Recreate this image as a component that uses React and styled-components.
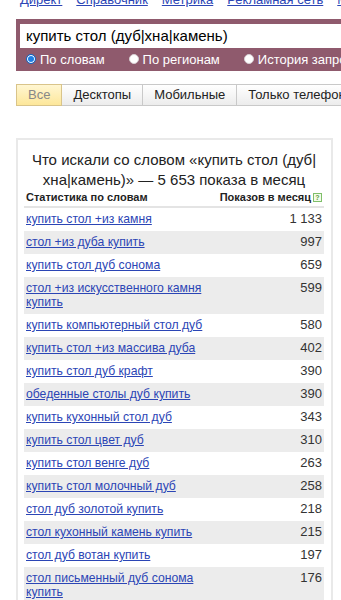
import React from "react";
import styled, { createGlobalStyle } from "styled-components";

const GlobalStyle = createGlobalStyle`
  html, body {
    margin: 0;
    padding: 0;
    background: #fff;
    overflow: hidden;
    font-family: "Liberation Sans", Arial, sans-serif;
  }
`;

const Page = styled.div`
  padding-left: 16px;
  width: 400px;
`;

const Nav = styled.div`
  display: flex;
  gap: 14px;
  margin-top: -8px;
  padding-left: 4px;
  font-size: 13px;
  line-height: 15px;
  white-space: nowrap;
`;

const NavLink = styled.a`
  color: #2b45b5;
  text-decoration: underline;
`;

const SearchPanel = styled.div`
  margin-top: 12px;
  background: #8f5a6d;
  padding: 5px 0 0 4px;
  height: 47px;
`;

const Input = styled.div`
  background: #fff;
  height: 24px;
  line-height: 24px;
  padding-left: 6px;
  font-size: 15px;
  color: #000;
  white-space: nowrap;
`;

const RadioRow = styled.div`
  display: flex;
  align-items: center;
  height: 22px;
  padding-left: 6px;
  gap: 24px;
  white-space: nowrap;
`;

const RadioItem = styled.label`
  display: flex;
  align-items: center;
  gap: 4px;
  color: #fff;
  font-size: 13px;
`;

const RadioDot = styled.span`
  width: 10px;
  height: 10px;
  border-radius: 50%;
  box-sizing: border-box;
  background: ${(p) => (p.$on ? "#1e7fe6" : "#fff")};
  border: 1px solid ${(p) => (p.$on ? "#1565c0" : "#d8d0d4")};
  box-shadow: ${(p) => (p.$on ? "inset 0 0 0 1px #fff" : "none")};
`;

const Tabs = styled.div`
  display: flex;
  margin-top: 13px;
  white-space: nowrap;
`;

const Tab = styled.div`
  height: 20px;
  line-height: 20px;
  padding: 0 11px;
  font-size: 13px;
  border: 1px solid ${(p) => (p.$active ? "#d9c48a" : "#c9c9c9")};
  border-left-width: ${(p) => (p.$first ? "1px" : "0")};
  color: ${(p) => (p.$active ? "#888" : "#222")};
  background: ${(p) =>
    p.$active
      ? "linear-gradient(#fff6d2, #fde79a)"
      : "linear-gradient(#ffffff, #ececec)"};
`;

const Card = styled.div`
  margin-top: 32px;
  width: 317px;
  box-sizing: border-box;
  border: 2px solid #e9e9e9;
  border-bottom: none;
  padding: 10px 7px 0 6px;
`;

const Title = styled.div`
  text-align: center;
  font-size: 15px;
  line-height: 20px;
  color: #222;
`;

const HeaderRow = styled.div`
  display: flex;
  justify-content: space-between;
  align-items: center;
  padding: 0 2px 2px 2px;
  border-bottom: 2px solid #e4e4e4;
  font-size: 11px;
  line-height: 14px;
  font-weight: bold;
  color: #222;
`;

const HeaderRight = styled.span`
  display: flex;
  align-items: center;
  gap: 2px;
`;

const Help = styled.span`
  width: 9px;
  height: 9px;
  box-sizing: border-box;
  border: 1px solid #7fbf6a;
  background: #f2fbe9;
  color: #5aa040;
  font-size: 7px;
  line-height: 7px;
  text-align: center;
  font-weight: bold;
`;

const Row = styled.div`
  display: flex;
  justify-content: space-between;
  align-items: flex-start;
  padding: 4px 2px 5px 2px;
  background: ${(p) => (p.$odd ? "#ececec" : "#fff")};
  font-size: 12.2px;
  line-height: 14px;
`;

const Phrase = styled.a`
  width: 205px;
  color: #2b45b5;
  text-decoration: underline;
`;

const Count = styled.span`
  color: #333;
  font-size: 13px;
`;

const links = ["Директ", "Справочник", "Метрика", "Рекламная сеть", "Маркет"];

const rows = [
  ["купить стол +из камня", "1 133"],
  ["стол +из дуба купить", "997"],
  ["купить стол дуб сонома", "659"],
  ["стол +из искусственного камня купить", "599"],
  ["купить компьютерный стол дуб", "580"],
  ["купить стол +из массива дуба", "402"],
  ["купить стол дуб крафт", "390"],
  ["обеденные столы дуб купить", "390"],
  ["купить кухонный стол дуб", "343"],
  ["купить стол цвет дуб", "310"],
  ["купить стол венге дуб", "263"],
  ["купить стол молочный дуб", "258"],
  ["стол дуб золотой купить", "218"],
  ["стол кухонный камень купить", "215"],
  ["стол дуб вотан купить", "197"],
  ["стол письменный дуб сонома купить", "176"],
];

export default function App() {
  return (
    <Page>
      <GlobalStyle />
      <Nav>
        {links.map((l) => (
          <NavLink key={l}>{l}</NavLink>
        ))}
      </Nav>
      <SearchPanel>
        <Input>купить стол (дуб|хна|камень)</Input>
        <RadioRow>
          <RadioItem><RadioDot $on />По словам</RadioItem>
          <RadioItem><RadioDot />По регионам</RadioItem>
          <RadioItem><RadioDot />История запросов</RadioItem>
        </RadioRow>
      </SearchPanel>
      <Tabs>
        <Tab $active $first>Все</Tab>
        <Tab>Десктопы</Tab>
        <Tab>Мобильные</Tab>
        <Tab>Только телефоны</Tab>
      </Tabs>
      <Card>
        <Title>
          Что искали со словом «купить стол (дуб|хна|камень)» — 5 653 показа в месяц
        </Title>
        <HeaderRow>
          <span>Статистика по словам</span>
          <HeaderRight>
            Показов в месяц <Help>?</Help>
          </HeaderRight>
        </HeaderRow>
        {rows.map(([p, c], i) => (
          <Row key={p} $odd={i % 2 === 1}>
            <Phrase>{p}</Phrase>
            <Count>{c}</Count>
          </Row>
        ))}
      </Card>
    </Page>
  );
}
